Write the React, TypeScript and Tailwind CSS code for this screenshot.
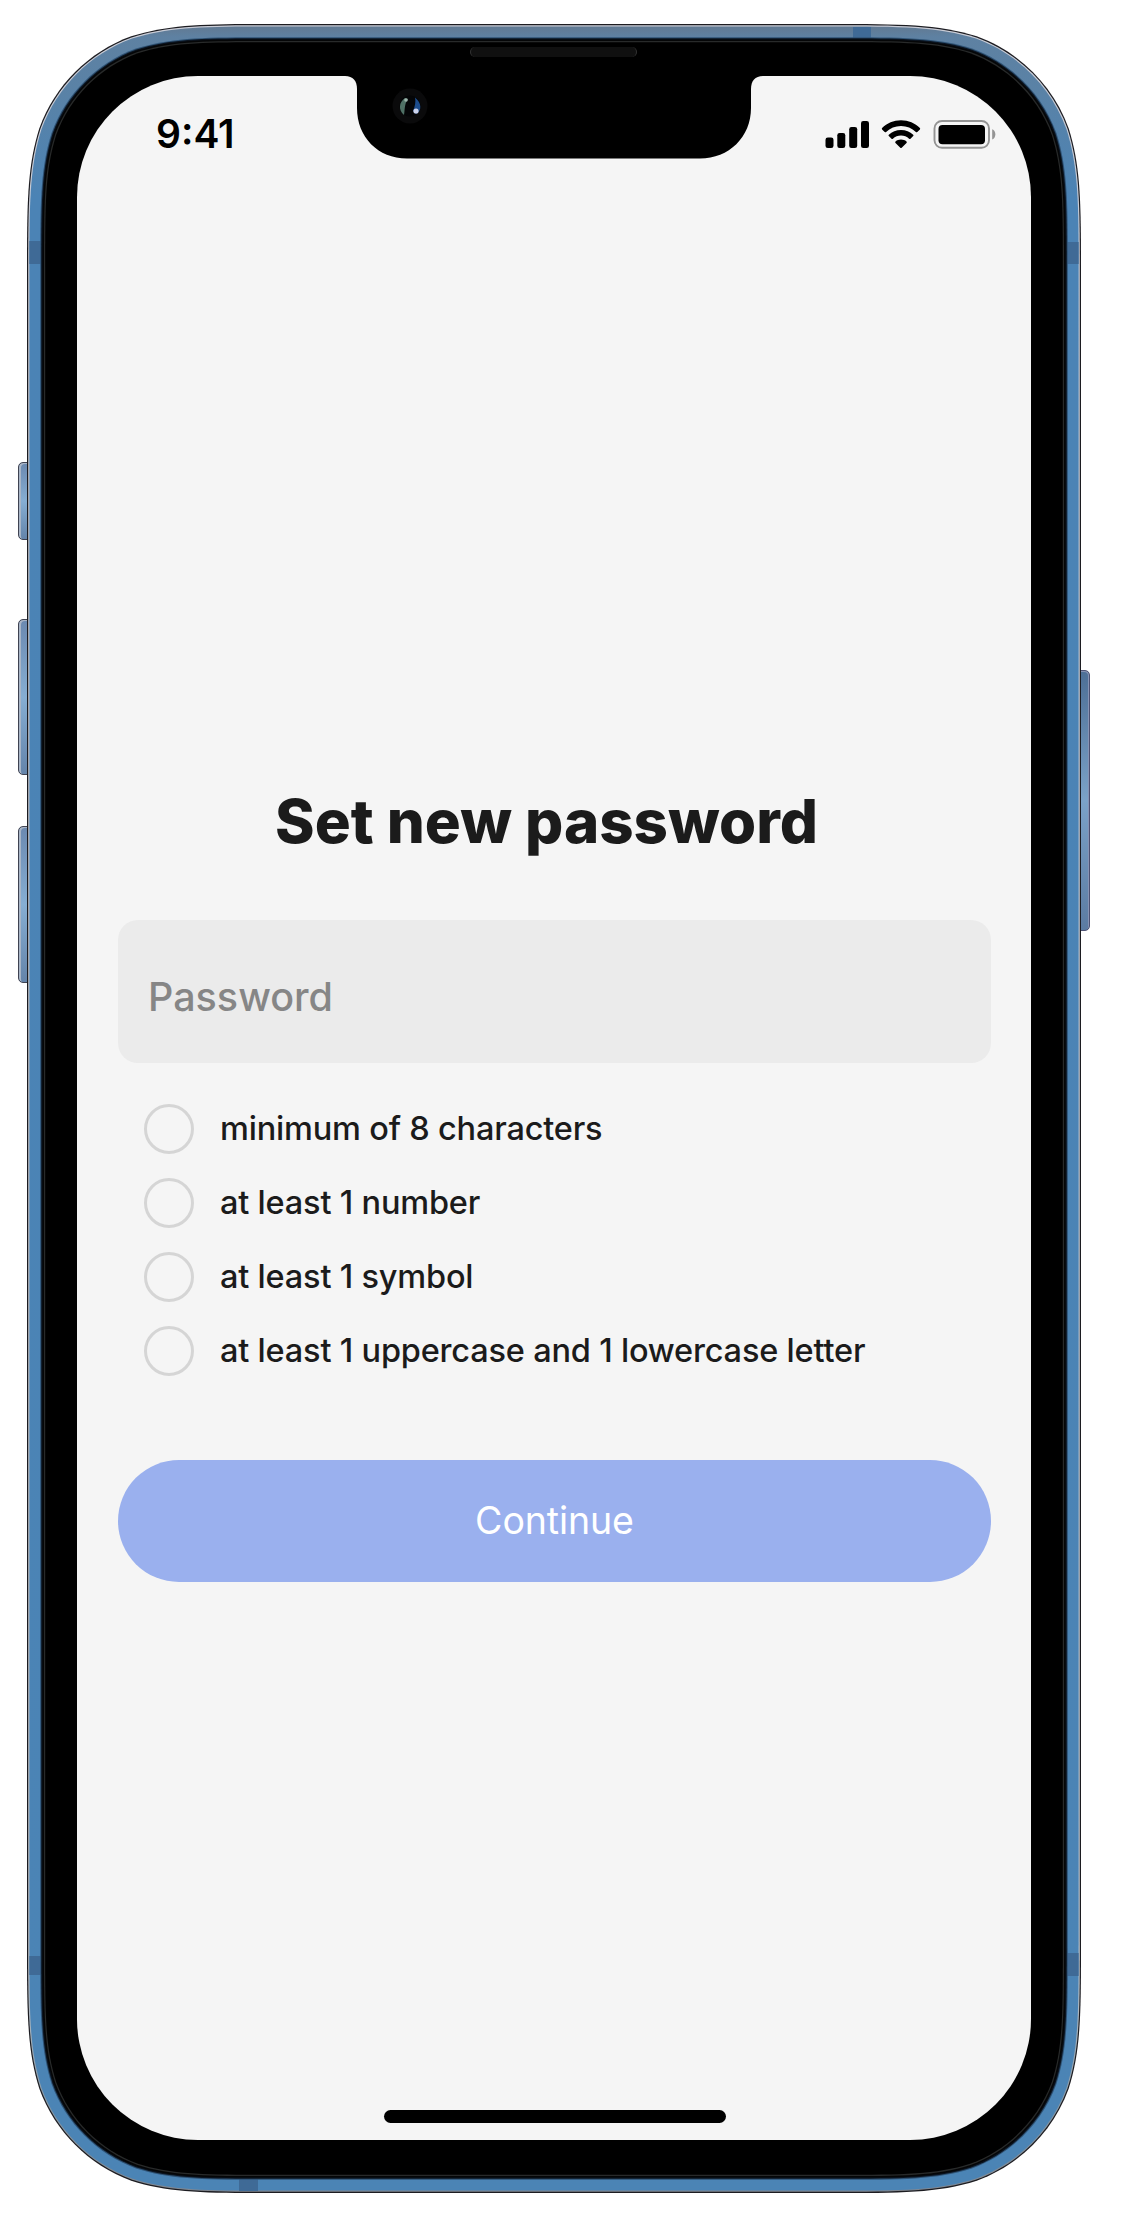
const W = 1054;
const H = 2169;

// Rounded rectangle with continuous-curvature corners, inset from the device outline.
function shell(inset: number): string {
  const r = 165 - inset;
  const a = 1.528665 * r;
  const b = 1.08849296 * r;
  const c = 0.86840694 * r;
  const d = 0.63149379 * r;
  const e = 0.07491139 * r;
  const f = 0.37282383 * r;
  const g = 0.16905956 * r;
  const l = inset;
  const t = inset;
  const x = W - inset;
  const y = H - inset;
  return [
    `M${l + a} ${t}`,
    `L${x - a} ${t}`,
    `C${x - b} ${t} ${x - c} ${t} ${x - d} ${t + e}`,
    `C${x - f} ${t + g} ${x - g} ${t + f} ${x - e} ${t + d}`,
    `C${x} ${t + c} ${x} ${t + b} ${x} ${t + a}`,
    `L${x} ${y - a}`,
    `C${x} ${y - b} ${x} ${y - c} ${x - e} ${y - d}`,
    `C${x - g} ${y - f} ${x - f} ${y - g} ${x - d} ${y - e}`,
    `C${x - c} ${y} ${x - b} ${y} ${x - a} ${y}`,
    `L${l + a} ${y}`,
    `C${l + b} ${y} ${l + c} ${y} ${l + d} ${y - e}`,
    `C${l + f} ${y - g} ${l + g} ${y - f} ${l + e} ${y - d}`,
    `C${l} ${y - c} ${l} ${y - b} ${l} ${y - a}`,
    `L${l} ${t + a}`,
    `C${l} ${t + b} ${l} ${t + c} ${l + e} ${t + d}`,
    `C${l + g} ${t + f} ${l + f} ${t + g} ${l + d} ${t + e}`,
    `C${l + c} ${t} ${l + b} ${t} ${l + a} ${t}Z`,
  ].join(" ");
}

function DeviceBody() {
  return (
    <svg className="absolute inset-0 h-full w-full" viewBox={`0 0 ${W} ${H}`} aria-hidden="true">
      <defs>
        <linearGradient id="rim" x1="0" y1="0" x2="0" y2={H} gradientUnits="userSpaceOnUse">
          <stop offset="0" stopColor="#62788f" />
          <stop offset="0.006" stopColor="#5e81a2" />
          <stop offset="0.03" stopColor="#5a82a6" />
          <stop offset="0.08" stopColor="#4b83b5" />
          <stop offset="1" stopColor="#4b84b5" />
        </linearGradient>
        <linearGradient id="shine" x1="0" y1="0" x2="0" y2={H} gradientUnits="userSpaceOnUse">
          <stop offset="0" stopColor="#c9ccd6" />
          <stop offset="0.9" stopColor="#b9c1c9" />
          <stop offset="0.96" stopColor="#8798a5" />
          <stop offset="1" stopColor="#7e858f" />
        </linearGradient>
      </defs>
      <path d={shell(0)} fill="#1c1c21" />
      <path d={shell(1.2)} fill="url(#shine)" />
      <path d={shell(2.4)} fill="url(#rim)" />
      <g fill="#3f6a96">
        <rect x="2.4" y="217" width="13" height="23" />
        <rect x="1038.6" y="218" width="13" height="22" />
        <rect x="826" y="3" width="18" height="13" />
        <rect x="2.4" y="1932" width="13" height="19" />
        <rect x="1038.6" y="1929" width="13" height="23" />
        <rect x="212" y="2154" width="19" height="13" />
      </g>
      <path d={shell(13.2)} fill="#2f5375" />
      <path d={shell(14.2)} fill="#0b1420" />
      <path d={shell(15.4)} fill="#050607" />
      <path d={shell(17)} fill="#282a2a" />
      <path d={shell(18.2)} fill="#000" />
    </svg>
  );
}

function SideButton({ side, className }: { side: "left" | "right"; className: string }) {
  return side === "left" ? (
    <div
      className={`absolute left-[-9px] w-[10px] rounded-l-[5px] border border-[#3f4352] bg-linear-to-b from-[#6b89b0] via-[#86aed3] to-[#6484aa] shadow-[inset_2px_1px_0_#a9b5c6] ${className}`}
    />
  ) : (
    <div
      className={`absolute right-[-9px] w-[10px] rounded-r-[5px] border border-[#4d5274] bg-linear-to-b from-[#4d6f96] via-[#7ba2c8] to-[#5b7ba2] shadow-[inset_-1px_1px_0_#8793b4] ${className}`}
    />
  );
}

function Notch() {
  return (
    <svg className="absolute top-[-1px] left-[268px]" width="418" height="84" viewBox="0 0 418 84" aria-hidden="true">
      <path d="M0 0H418V1C410 1 406 6 406 14V33C406 62 384 83.500 355 83.500H62C33 83.500 12 62 12 33V14C12 6 8 1 0 1Z" fill="#000" />
      <circle cx="65" cy="31" r="17.500" fill="#0a0a0b" />
      <circle cx="65" cy="31" r="10.500" fill="#040507" />
      <path d="M60 23C54 27 53 35 59 40C60 36 59 29 63 24Z" fill="#4f7065" />
      <path d="M70 22.500C77 28 77 36 71 39L68 36C70 31 71 27 70 22.500Z" fill="#1c4c8c" />
      <circle cx="61" cy="25" r="1.800" fill="#9db5ad" />
      <circle cx="71" cy="36" r="2.600" fill="#cdd3ec" />
    </svg>
  );
}

function SignalIcon() {
  return (
    <svg width="45" height="29" viewBox="0 0 45 29" aria-hidden="true">
      <rect x="0.500" y="17.500" width="8" height="10.500" rx="2.300" />
      <rect x="12.300" y="13" width="8" height="15" rx="2.300" />
      <rect x="24.200" y="7" width="8" height="21" rx="2.300" />
      <rect x="36" y="1" width="8" height="27" rx="2.300" />
    </svg>
  );
}

function WifiIcon() {
  return (
    <svg width="40" height="29" viewBox="0 0 40 29" aria-hidden="true">
      <path d="M20 0.300C27.500 0.300 34 3.200 38.900 8Q39.500 8.700 38.900 9.400L36.300 12Q35.600 12.600 34.900 12C30.900 8.200 25.800 6 20 6S9.100 8.200 5.100 12Q4.400 12.600 3.700 12L1.100 9.400Q0.500 8.700 1.100 8C6 3.200 12.500 0.300 20 0.300Z" />
      <path d="M20 10C24.800 10 29 11.700 32.200 14.700Q32.900 15.400 32.200 16.100L29.500 18.800Q28.800 19.400 28.100 18.800C25.900 16.800 23.100 15.600 20 15.600S14.100 16.800 11.900 18.800Q11.200 19.400 10.500 18.800L7.800 16.100Q7.100 15.400 7.800 14.700C11 11.700 15.200 10 20 10Z" />
      <path d="M20 19.600C22.100 19.600 24 20.300 25.500 21.500Q26.200 22.200 25.500 22.900L20.700 27.800Q20 28.400 19.300 27.800L14.500 22.900Q13.800 22.200 14.500 21.500C16 20.300 17.900 19.600 20 19.600Z" />
    </svg>
  );
}

function BatteryIcon() {
  return (
    <svg width="63" height="29" viewBox="0 0 63 29" aria-hidden="true">
      <rect x="1.500" y="1" width="54.500" height="26.800" rx="7.500" fill="none" stroke="#949494" strokeWidth="1.900" />
      <rect x="5.500" y="5" width="46.500" height="19.300" rx="4" />
      <path d="M59.200 9.300C63.400 11 63.400 17.800 59.200 19.500Z" fill="#949494" />
    </svg>
  );
}

const rules = [
  "minimum of 8 characters",
  "at least 1 number",
  "at least 1 symbol",
  "at least 1 uppercase and 1 lowercase letter",
];

export default function App() {
  return (
    <main className="h-[2226px] w-[1122px] overflow-hidden bg-white pt-[24px] pl-[27px] font-['Inter',sans-serif]">
      <div className="relative h-[2169px] w-[1054px] px-[50px] pt-[52px]">
        <SideButton side="left" className="top-[438px] h-[78px]" />
        <SideButton side="left" className="top-[595px] h-[156px]" />
        <SideButton side="left" className="top-[802px] h-[157px]" />
        <SideButton side="right" className="top-[646px] h-[261px]" />
        <DeviceBody />
        <div className="absolute top-[23px] left-[443px] h-[10px] w-[167px] rounded-full border-x border-[#333] bg-[#101010]" />

        <div className="relative flex h-[2064px] w-[954px] flex-col rounded-[121px] bg-[#f5f5f5]">
          <Notch />
          <header className="flex h-[116px] items-center justify-between pr-[35px] pl-[79px] text-black">
            <span className="mb-px text-[39px] leading-[52px] font-[560]">9:41</span>
            <div className="flex items-center">
              <SignalIcon />
              <span className="w-[11px]" />
              <WifiIcon />
              <span className="w-[12px]" />
              <BatteryIcon />
            </div>
          </header>

          <section className="mt-[589px] flex flex-col pr-[40px] pl-[41px]">
            <h1 className="h-[80px] pr-[16px] text-center text-[60px] leading-[80px] font-extrabold text-[#1b1b1b]">
              Set new password
            </h1>
            <div className="mt-[59px] flex h-[143px] items-center rounded-[20px] bg-[#ebebeb] pt-[12px] pl-[30px] text-[39.5px] font-[450] text-[#868686]">
              Password
            </div>
            <ul className="mt-[29px] flex flex-col pl-[26px]">
              {rules.map((rule) => (
                <li
                  key={rule}
                  className="flex h-[74px] items-center gap-[26px] text-[32.5px] font-[450] tracking-[-0.19px] text-[#1b1b1b]"
                >
                  <span className="size-[50px] rounded-full border-3 border-[#d5d5d5]" />
                  <span className="whitespace-nowrap">{rule}</span>
                </li>
              ))}
            </ul>
            <button className="mt-[72px] h-[122px] rounded-full bg-[#9ab0ee] text-[37.5px] font-[430] tracking-[-0.1px] text-white">
              Continue
            </button>
          </section>
          <div className="mt-auto mb-[17px] ml-[307px] h-[13px] w-[342px] rounded-full bg-black" />
        </div>
      </div>
    </main>
  );
}
